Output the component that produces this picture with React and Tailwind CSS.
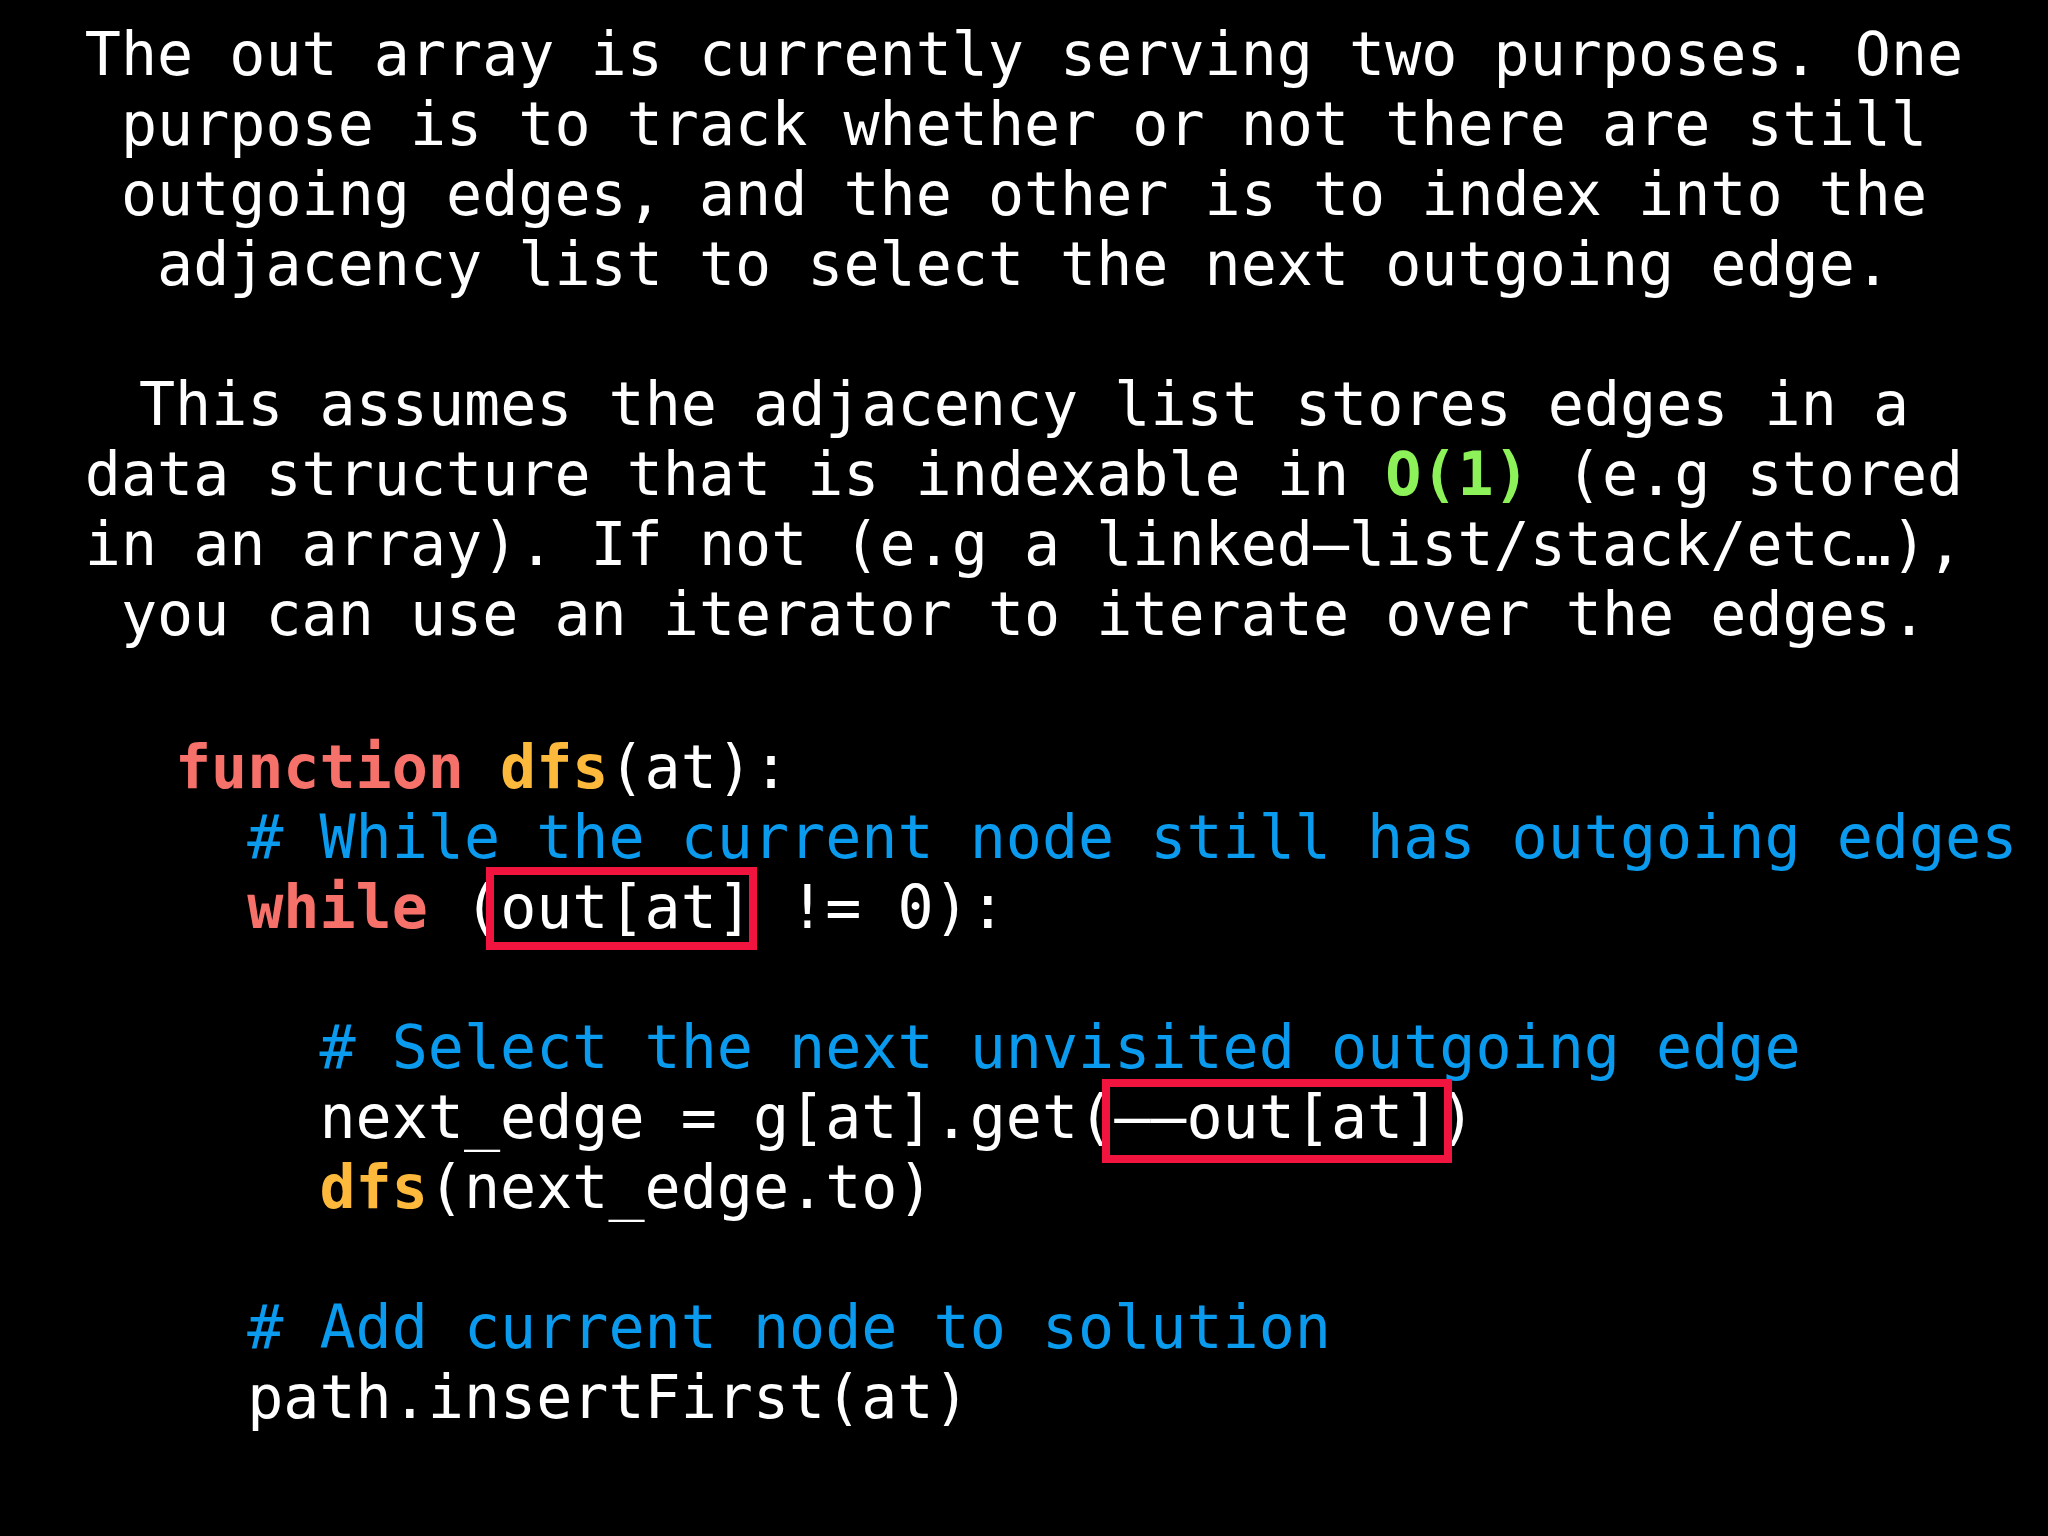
const intro = [
  "The out array is currently serving two purposes. One",
  "purpose is to track whether or not there are still",
  "outgoing edges, and the other is to index into the",
  "adjacency list to select the next outgoing edge.",
];

function Marked({ children, box }) {
  return (
    <span className="relative">
      {children}
      <span className={`absolute border-[8px] border-[#f0143e] ${box}`} />
    </span>
  );
}

const Kw = ({ children }) => (
  <span className="font-bold text-[#f7716b]">{children}</span>
);
const Fn = ({ children }) => (
  <span className="font-bold text-[#fdb93b]">{children}</span>
);
const Cm = ({ children }) => <span className="text-[#0a9bee]">{children}</span>;

export default function App() {
  return (
    <div className="min-h-screen bg-black pt-[19px] font-['DejaVu_Sans_Mono',monospace] text-[60px] leading-[70px] text-white">
      <div className="whitespace-pre text-center">
        {intro.map((line) => (
          <div key={line}>{line}</div>
        ))}
      </div>

      <div className="mt-[70px] whitespace-pre text-center">
        <div>This assumes the adjacency list stores edges in a</div>
        <div>
          data structure that is indexable in{" "}
          <span className="font-bold text-[#8df259]">O(1)</span> (e.g stored
        </div>
        <div>in an array). If not (e.g a linked–list/stack/etc…),</div>
        <div>you can use an iterator to iterate over the edges.</div>
      </div>

      <div className="mt-[83px] whitespace-pre pl-[175px]">
        <div>
          <Kw>function</Kw> <Fn>dfs</Fn>(at):
        </div>
        <div>
          {"  "}
          <Cm># While the current node still has outgoing edges</Cm>
        </div>
        <div>
          {"  "}
          <Kw>while</Kw> (
          <Marked box="-left-[14px] -right-[4px] -top-[5px] -bottom-[8px]">
            out[at]
          </Marked>{" "}
          != 0):
        </div>
        <div className="h-[70px]" />
        <div>
          {"    "}
          <Cm># Select the next unvisited outgoing edge</Cm>
        </div>
        <div>
          {"    "}next_edge = g[at].get(
          <Marked box="-left-[12px] -right-[13px] -top-[3px] -bottom-[11px]">
            ––out[at]
          </Marked>
          )
        </div>
        <div>
          {"    "}
          <Fn>dfs</Fn>(next_edge.to)
        </div>
        <div className="h-[70px]" />
        <div>
          {"  "}
          <Cm># Add current node to solution</Cm>
        </div>
        <div>{"  "}path.insertFirst(at)</div>
      </div>
    </div>
  );
}
